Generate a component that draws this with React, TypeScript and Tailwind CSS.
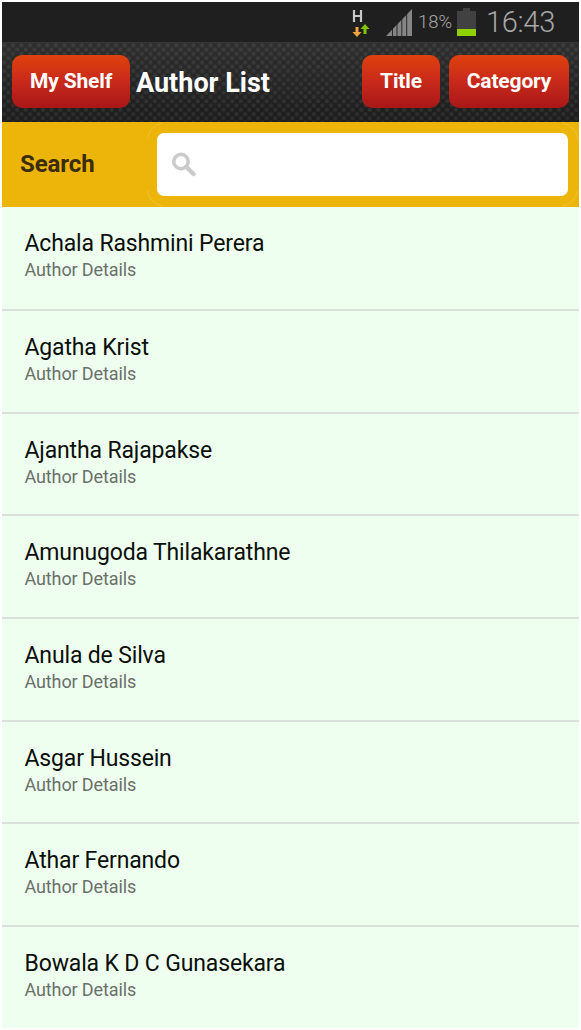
import type { ReactNode } from 'react';

const authors = [
  'Achala Rashmini Perera',
  'Agatha Krist',
  'Ajantha Rajapakse',
  'Amunugoda Thilakarathne',
  'Anula de Silva',
  'Asgar Hussein',
  'Athar Fernando',
  'Bowala K D C Gunasekara',
];

function StatusBar() {
  return (
    <div className="h-10 shrink-0 bg-[#1f1f1f] flex items-center justify-end pr-[23px] text-[#a8a8a8]">
      <svg width="20" height="30" viewBox="0 0 20 30" className="mr-[15px]">
        <path d="M3 3v12M10 3v12M3 9h7" stroke="#c8c8c8" strokeWidth="2.2" fill="none" />
        <path d="M4.5 20h3v5h3L6 30l-4.5-5h3z" fill="#f3a43c" />
        <path d="M12.5 27h3v-5h3L14 17l-4.5 5h3z" fill="#85c400" />
      </svg>
      <svg width="27" height="27" viewBox="0 0 27 27" className="mr-[5px]">
        <path d="M0 27L26 0V27Z" fill="#858585" />
        <path d="M6.5 17v10M11 12v15M15.8 7v20M20.7 2v25" stroke="#1f1f1f" strokeWidth="0.9" />
      </svg>
      <span className="w-[36px] pt-px text-[18.5px] leading-none font-light whitespace-nowrap">18%</span>
      <svg width="19" height="28" viewBox="0 0 19 28" className="ml-[3px] mr-[10px]">
        <path d="M6 0h7v3h6v18H0V3h6z" fill="#414141" />
        <rect y="21" width="19" height="7" fill="#8fd000" />
      </svg>
      <span className="w-[70px] text-[29px] leading-none font-light tracking-[-0.3px] whitespace-nowrap">16:43</span>
    </div>
  );
}

function HeaderButton({ className, children }: { className: string; children: ReactNode }) {
  return (
    <button className={`h-[53px] shrink-0 rounded-[10px] bg-linear-to-b from-[#de410c] via-[#c8291a] to-[#a91718] text-white text-[21px] font-bold tracking-[-0.15px] whitespace-nowrap ${className}`}>
      {children}
    </button>
  );
}

function HeaderBar() {
  return (
    <div className="relative h-20 shrink-0 bg-linear-to-b from-[#2e2e2e] to-[#1c1c1c] border-t border-[#363636]">
      <svg className="absolute inset-0" width="577" height="79">
        <defs>
          <pattern id="weave" width="8.6" height="8.6" patternUnits="userSpaceOnUse">
            <rect x="0.3" y="0.3" width="4" height="4" rx="1.5" fill="#fff" fillOpacity="0.07" />
            <rect x="4.6" y="4.6" width="4" height="4" rx="1.5" fill="#fff" fillOpacity="0.07" />
          </pattern>
        </defs>
        <rect width="577" height="79" fill="url(#weave)" />
      </svg>
      <div className="relative flex items-center pt-3 pl-[10px] pr-[10px]">
        <HeaderButton className="w-[118px]">My Shelf</HeaderButton>
        <h1 className="ml-[6px] mt-[2px] flex-1 text-[27px] leading-8 font-bold text-white whitespace-nowrap">Author List</h1>
        <HeaderButton className="w-[78px]">Title</HeaderButton>
        <HeaderButton className="w-[120px] ml-[9px]">Category</HeaderButton>
      </div>
    </div>
  );
}

function SearchBar() {
  return (
    <div className="relative h-[85px] shrink-0 bg-[#edb509] flex items-center">
      <label htmlFor="search" className="w-[155px] pl-[18px] pb-[2px] text-[24px] font-bold text-[#3b2c0a] tracking-[-0.1px]">Search</label>
      <div className="flex-1 pr-[11px]">
        <div className="h-[63px] rounded-[7px] bg-white flex items-center pl-[14px]">
          <svg width="26" height="26" viewBox="0 0 26 26" fill="none" stroke="#cbcbcb">
            <circle cx="10" cy="9.5" r="7.2" strokeWidth="3.6" />
            <path d="M15.5 15l7 7" strokeWidth="4.5" strokeLinecap="round" />
          </svg>
          <input id="search" className="flex-1 h-full outline-none text-xl" />
        </div>
      </div>
      <svg className="absolute top-0 right-0 pointer-events-none" width="433" height="85" fill="none" stroke="#f2c94a" strokeOpacity="0.6">
        <path d="M1 17Q4 4 16 1M1 68Q4 81 16 84M417 1Q429 4 432 17M417 84Q429 81 432 68" />
      </svg>
    </div>
  );
}

export default function App() {
  return (
    <div className="w-[581px] h-[1030px] overflow-hidden bg-white p-[2px] font-['Roboto',sans-serif]">
      <div className="h-[1026px] flex flex-col overflow-hidden bg-[#efffef]">
        <StatusBar />
        <HeaderBar />
        <SearchBar />
        <ul className="pt-[1.7px]">
          {authors.map((name) => (
            <li key={name} className="h-[102.6px] pt-[22px] first:pt-[20.5px] pl-[22.5px] border-b-2 border-[#dae1da] last:border-b-0">
              <div className="text-[23px] leading-[30px] tracking-[-0.15px] text-[#0b0f0b]">{name}</div>
              <div className="-mt-px text-[18px] leading-6 tracking-[-0.12px] text-[#6a706a]">Author Details</div>
            </li>
          ))}
        </ul>
      </div>
    </div>
  );
}
